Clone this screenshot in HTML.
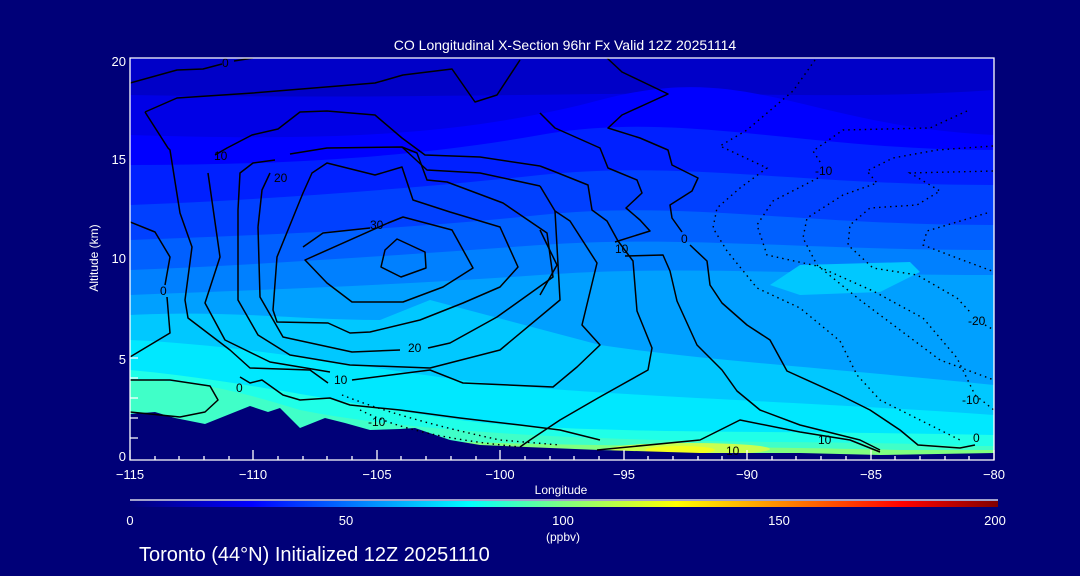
<!DOCTYPE html>
<html><head><meta charset="utf-8"><style>
html,body{margin:0;padding:0;background:#000078;}
svg{display:block}
text{font-family:"Liberation Sans","DejaVu Sans",sans-serif;fill:#fff}
</style></head><body>
<svg width="1080" height="576" viewBox="0 0 1080 576" xmlns="http://www.w3.org/2000/svg">
<defs>
<linearGradient id="cb" x1="0" x2="1" y1="0" y2="0">
<stop offset="0" stop-color="#000078"/>
<stop offset="0.14" stop-color="#0000ff"/>
<stop offset="0.39" stop-color="#00ffff"/>
<stop offset="0.5" stop-color="#80ff80"/>
<stop offset="0.63" stop-color="#ffff00"/>
<stop offset="0.76" stop-color="#ff8000"/>
<stop offset="0.89" stop-color="#ff0000"/>
<stop offset="1" stop-color="#800000"/>
</linearGradient>
<clipPath id="pc"><rect x="130" y="58" width="864" height="402"/></clipPath>
</defs>
<rect width="1080" height="576" fill="#000078"/>
<g clip-path="url(#pc)">
<rect x="130" y="58" width="864" height="402" fill="#0000c8"/>
<path d="M130,95 C300,98 450,96 600,94 S850,100 994,90 L994,460 L130,460Z" fill="#0000e6"/>
<path d="M130,135 C300,140 450,140 600,100 S800,125 994,135 L994,460 L130,460Z" fill="#0000ff"/>
<path d="M130,165 C260,165 400,160 540,135 S800,150 994,150 L994,460 L130,460Z" fill="#0020ff"/>
<path d="M130,205 C260,200 400,190 540,175 S800,185 994,185 L994,460 L130,460Z" fill="#0040ff"/>
<path d="M130,240 C260,235 400,230 540,215 S800,225 994,225 L994,460 L130,460Z" fill="#0060ff"/>
<path d="M130,270 C260,265 400,255 540,245 S800,250 994,250 L994,460 L130,460Z" fill="#0080ff"/>
<path d="M130,295 C260,290 400,285 540,275 S800,275 994,275 L994,460 L130,460Z" fill="#00a0ff"/>
<path d="M770,285 L800,265 L910,262 L920,272 L880,292 L800,295Z" fill="#00c8ff"/>
<path d="M130,315 C230,310 300,320 380,320 L430,300 L600,345 C700,360 850,370 994,385 L994,460 L130,460Z" fill="#00c8ff"/>
<path d="M130,340 C240,345 350,365 460,380 S780,400 994,415 L994,460 L130,460Z" fill="#00e8ff"/>
<path d="M130,370 C240,380 350,405 460,420 S780,430 994,435 L994,460 L130,460Z" fill="#20ffe8"/>
<path d="M130,380 C200,380 240,392 300,410 C400,430 560,440 780,442 S900,446 994,446 L994,460 L130,460Z" fill="#40ffc8"/>
<path d="M400,440 C560,446 780,447 900,450 L994,450 L994,460 L400,460Z" fill="#80ff80"/>
<ellipse cx="690" cy="449" rx="80" ry="6" fill="#c8ff50"/>
<ellipse cx="680" cy="450" rx="35" ry="4" fill="#f0ff20"/>
<path d="M130,414 L155,412 L175,418 L205,424 L250,406 L268,412 L280,408 L300,428 L325,418 L345,423 L370,430 L400,429 L415,428 L450,440 L480,445 L550,448 L600,450 L700,453 L800,453 L880,455 L994,453 L994,460 L130,460Z" fill="#000078"/>
<g fill="none" stroke="#000" stroke-width="1.5" stroke-linejoin="round">
<path d="M130,83 L177,70 L203,69 L222,64 M234,61 L253,58"/>
<path d="M145,112 L177,98 L253,93 L375,83 L403,75 L452,69 L475,102 L497,95 L520,60"/>
<path d="M607,58 L622,72 L668,94 L622,115 L608,128 L640,138 L668,150 L672,165 L698,178 L692,191 L670,205 L672,218 L682,232 M690,245 L707,261 L710,285 L722,303 L747,325 L770,340 L787,371 L840,395 L870,410 L900,430 L918,445 L960,448 L975,445"/>
<path d="M540,113 L555,128 L600,148 L608,168 L637,180 L642,193 L626,208 L640,220 L650,231 L615,242 M625,256 L663,255 L670,271 L677,301 L697,345 L722,370 L737,391 L760,410 L800,425 L860,440 L880,450"/>
<path d="M540,166 L553,171 L588,185 L592,210 L607,221 L618,241 L633,261 L637,311 L652,348 L648,370 L598,398 L560,420 L530,440 L520,447"/>
<path d="M540,230 L557,265 L540,295"/>
<path d="M145,112 L168,148 L170,150 L180,213 L192,247 L185,300 L188,318 L230,350 L250,368 L310,370 L328,383 M352,380 L430,370 L463,383 L553,387 L577,367 L600,345 L582,325 L597,263 L570,221 L555,211 L540,186"/>
<path d="M130,222 L155,232 L170,257 L165,285 M167,297 L170,333 L130,357"/>
<path d="M208,173 L220,257 L205,303 L225,340 L270,362 L330,372"/>
<path d="M215,155 L227,148 L252,135 L278,129 L300,112 L327,111 L375,115 L402,138 L425,155 L480,157 L540,166"/>
<path d="M238,210 L240,173 L253,163 L275,160 M290,154 L327,148 L402,147 L427,170 L480,173 L540,186 M238,210 L238,300 L258,335 L290,355 L350,365 L430,368 L500,350 L560,300 L555,211"/>
<path d="M258,227 L260,297 L283,337 L352,352 L400,350 M428,348 L450,343 L497,317 L553,277 L547,233 L503,203 L447,182 L427,180 L417,153 L402,147 M258,227 L262,190 L270,173"/>
<path d="M312,173 L327,163 L375,175 L402,167 L413,200 L450,212 L500,227 L518,267 L500,287 L463,303 L420,320 L370,332 L350,333 L328,323 L277,322 L273,310 L277,257 L303,193Z"/>
<path d="M303,247 L323,233 L370,228 M388,223 L403,217 L452,230 L473,268 L443,287 L403,302 L352,302 L327,283 L305,260Z"/>
<path d="M397,239 L425,252 L426,268 L401,277 L381,267 L385,250Z"/>
<path d="M130,380 L170,380 L210,386 L218,400 L205,412 L180,417 L130,412 M240,377 L250,383 L262,380 L283,395 L300,400 L330,398 L350,405 L400,410 L460,418 L520,425 L560,430 L600,440"/>
<path d="M597,450 L700,440 L740,420 L800,432 L850,440 L880,452"/>
</g>
<g fill="none" stroke="#000" stroke-width="1.4" stroke-dasharray="1.5 4">
<path d="M815,60 L793,91 L747,130 L720,146 L767,168 L740,188 L717,208 L713,228 L727,251 L757,288 L800,308 L840,341 L857,375 L880,400 L920,420 L960,440"/>
<path d="M967,111 L930,128 L843,130 L813,151 L822,165 M818,178 L773,201 L757,225 L767,255 L817,266 L873,291 L923,318 L957,358 L975,395 L994,410"/>
<path d="M993,146 L937,150 L893,158 L867,171 L877,183 L843,195 L807,218 L803,238 L817,265 L860,300 L900,330 L940,360 L994,380"/>
<path d="M993,171 L910,173 L940,191 L917,205 L870,208 L850,225 L848,245 L873,268 L917,275 L957,298 L970,312 M985,325 L994,330"/>
<path d="M987,213 L927,231 L923,245 L957,258 L992,271"/>
<path d="M342,395 C380,410 430,425 500,440 L560,445"/>
<path d="M360,410 C400,430 450,440 520,447"/>
</g>
<g font-size="12" fill="#000">
<text x="222" y="67" style="fill:#000">0</text>
<text x="214" y="160" style="fill:#000">10</text>
<text x="274" y="182" style="fill:#000">20</text>
<text x="370" y="229" style="fill:#000">30</text>
<text x="160" y="295" style="fill:#000">0</text>
<text x="236" y="392" style="fill:#000">0</text>
<text x="408" y="352" style="fill:#000">20</text>
<text x="334" y="384" style="fill:#000">10</text>
<text x="368" y="426" style="fill:#000">-10</text>
<text x="615" y="253" style="fill:#000">10</text>
<text x="681" y="243" style="fill:#000">0</text>
<text x="815" y="175" style="fill:#000">-10</text>
<text x="968" y="325" style="fill:#000">-20</text>
<text x="962" y="404" style="fill:#000">-10</text>
<text x="973" y="442" style="fill:#000">0</text>
<text x="818" y="444" style="fill:#000">10</text>
<text x="726" y="455" style="fill:#000">10</text>
</g>
</g>
<g stroke="#fff" stroke-width="1.3" fill="none">
<path d="M130,58 L994,58 L994,460 L130,460 Z"/>
<path d="M130,460 V450 M253,460 V450 M377,460 V450 M500,460 V450 M624,460 V450 M747,460 V450 M871,460 V450 M994,460 V450"/>
<path d="M155,460 V456 M179,460 V456 M204,460 V456 M229,460 V456 M278,460 V456 M303,460 V456 M327,460 V456 M352,460 V456 M401,460 V456 M426,460 V456 M451,460 V456 M476,460 V456 M525,460 V456 M550,460 V456 M574,460 V456 M599,460 V456 M648,460 V456 M673,460 V456 M698,460 V456 M722,460 V456 M772,460 V456 M796,460 V456 M821,460 V456 M846,460 V456 M895,460 V456 M920,460 V456 M945,460 V456 M969,460 V456"/>
<path d="M130,438 H138 M130,418 H138 M130,398 H138 M130,378 H138 M130,358 H138"/>
<path d="M130,500 H998"/>
</g>
<rect x="130" y="501" width="868" height="6" fill="url(#cb)"/>
<text x="565" y="50" font-size="14" text-anchor="middle">CO Longitudinal X-Section 96hr  Fx Valid 12Z 20251114</text>
<g font-size="13" text-anchor="end">
<text x="126" y="66">20</text><text x="126" y="164">15</text><text x="126" y="263">10</text><text x="126" y="364">5</text><text x="126" y="461">0</text>
</g>
<text transform="translate(98,258) rotate(-90)" font-size="12" text-anchor="middle">Altitude (km)</text>
<g font-size="13" text-anchor="middle">
<text x="130" y="479">−115</text><text x="253" y="479">−110</text><text x="377" y="479">−105</text><text x="500" y="479">−100</text><text x="624" y="479">−95</text><text x="747" y="479">−90</text><text x="871" y="479">−85</text><text x="994" y="479">−80</text>
</g>
<text x="561" y="494" font-size="12" text-anchor="middle">Longitude</text>
<g font-size="13" text-anchor="middle">
<text x="130" y="525">0</text><text x="346" y="525">50</text><text x="563" y="525">100</text><text x="779" y="525">150</text><text x="995" y="525">200</text>
</g>
<text x="563" y="541" font-size="12" text-anchor="middle">(ppbv)</text>
<text x="139" y="561" font-size="20">Toronto (44°N) Initialized 12Z 20251110</text>
</svg>
</body></html>
